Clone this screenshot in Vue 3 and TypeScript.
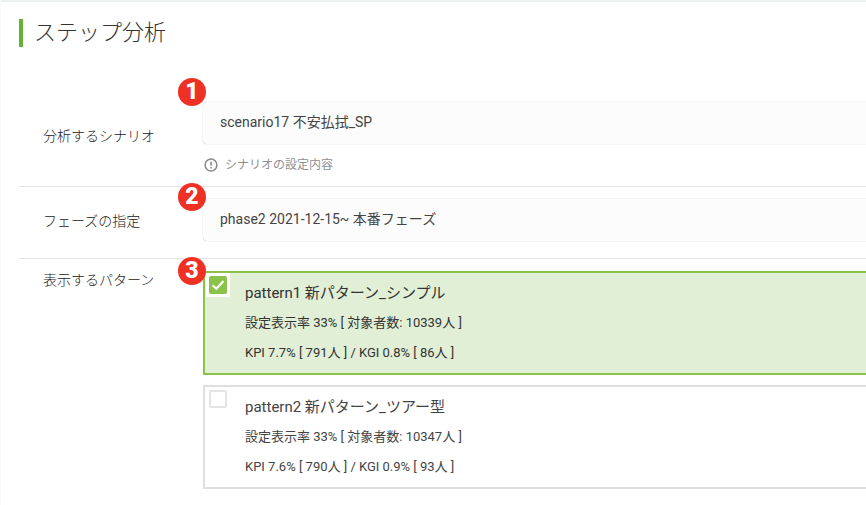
<script setup lang="ts">
interface Pattern {
  name: string
  rate: string
  kpi: string
  on: boolean
}
const patterns: Pattern[] = [
  { name: 'pattern1 新パターン_シンプル', rate: '設定表示率 33% [ 対象者数: 10339人 ]', kpi: 'KPI 7.7% [ 791人 ] / KGI 0.8% [ 86人 ]', on: true },
  { name: 'pattern2 新パターン_ツアー型', rate: '設定表示率 33% [ 対象者数: 10347人 ]', kpi: 'KPI 7.6% [ 790人 ] / KGI 0.9% [ 93人 ]', on: false },
]
</script>

<template>
  <div class="page">
    <h1 class="title">ステップ分析</h1>

    <section class="row row-one">
      <div class="label label-one">分析するシナリオ</div>
      <div class="body">
        <span class="badge">1</span>
        <div class="field">scenario17 不安払拭_SP</div>
        <div class="hint">
          <svg width="14" height="14" viewBox="0 0 14 14" fill="none">
            <circle cx="7" cy="7" r="5.9" stroke="#8a8a8a" stroke-width="1.5" />
            <path d="M7 3.5v4.2M7 8.9v1.5" stroke="#8a8a8a" stroke-width="1.5" />
          </svg>
          <span>シナリオの設定内容</span>
        </div>
      </div>
    </section>

    <section class="row row-two">
      <div class="label label-two">フェーズの指定</div>
      <div class="body">
        <span class="badge">2</span>
        <div class="field">phase2 2021-12-15~ 本番フェーズ</div>
      </div>
    </section>

    <section class="row row-three">
      <div class="label label-three">表示するパターン</div>
      <div class="body cards">
        <span class="badge">3</span>
        <div v-for="p in patterns" :key="p.name" class="card" :class="{ on: p.on }">
          <span class="check">
            <span class="box">
              <svg v-if="p.on" width="14" height="12" viewBox="0 0 14 12" fill="none">
                <path d="M1.5 6.2l3.8 3.6 7.2-7.8" stroke="#fff" stroke-width="2.2" />
              </svg>
            </span>
          </span>
          <div class="name">{{ p.name }}</div>
          <div class="meta">{{ p.rate }}</div>
          <div class="meta">{{ p.kpi }}</div>
        </div>
      </div>
    </section>
  </div>
</template>

<style>
html,
body {
  margin: 0;
  overflow: hidden;
  background: #fff;
}
</style>

<style scoped>
.page {
  width: 866px;
  height: 505px;
  box-sizing: border-box;
  padding: 19px 0 0 18px;
  border-top: 2px solid #eef2ee;
  border-left: 1px solid #f8f8f8;
  overflow: hidden;
  font-family: Roboto, "Noto Sans CJK JP", sans-serif;
  font-weight: 300;
  color: #333;
  background: #fff;
}
.title {
  margin: -2px 0 0;
  height: 28px;
  line-height: 28px;
  border-left: 4px solid #67b136;
  padding-left: 11px;
  font-size: 22px;
  font-weight: 300;
  color: #333;
}
.row {
  display: flex;
  border-bottom: 1px solid #e6e6e6;
}
.row-one {
  margin-top: 55px;
  height: 84px;
}
.row-two {
  height: 71px;
}
.row-three {
  border-bottom: 0;
}
.label {
  width: 184px;
  flex: none;
  box-sizing: border-box;
  padding-left: 24px;
  font-size: 14px;
  line-height: 20px;
  color: #222;
}
.label-one {
  padding-top: 24px;
}
.label-two {
  padding-top: 24px;
}
.label-three {
  padding-top: 11px;
}
.body {
  position: relative;
  flex: 1;
  min-width: 0;
}
.badge {
  position: absolute;
  left: -25px;
  top: -24px;
  width: 28px;
  height: 28px;
  border-radius: 50%;
  background: #ee3124;
  color: #fff;
  font-size: 23px;
  font-weight: 900;
  line-height: 28px;
  text-align: center;
  z-index: 2;
}
.row-two .badge {
  top: -4px;
}
.row-three .badge {
  top: -2px;
}
.field {
  box-sizing: border-box;
  height: 42px;
  margin-right: -8px;
  padding-left: 17px;
  line-height: 40px;
  font-size: 14px;
  font-weight: 400;
  color: #444;
  background: #fcfcfc;
  border-radius: 4px;
  box-shadow: 0 0 1px rgba(0, 0, 0, 0.4);
}
.row-two .field {
  margin-top: 12px;
}
.hint {
  display: flex;
  align-items: center;
  gap: 7px;
  margin-top: 12px;
  padding-left: 1px;
  font-size: 12px;
  line-height: 18px;
  font-weight: 400;
  color: #8f8f8f;
}
.cards {
  padding-top: 12px;
  display: flex;
  flex-direction: column;
  gap: 10px;
}
.card {
  position: relative;
  box-sizing: border-box;
  height: 104px;
  margin-right: -8px;
  padding: 9px 0 0 40px;
  border: 2px solid #dfdfdf;
  background: #fff;
  color: #444;
}
.card.on {
  border-color: #8bc34a;
  background: #e0efd6;
  color: #333;
}
.check {
  position: absolute;
  left: 1px;
  top: 0;
  width: 24px;
  height: 24px;
  display: flex;
  align-items: center;
  justify-content: center;
}
.card.on .check {
  background: #fff;
}
.box {
  box-sizing: border-box;
  width: 18px;
  height: 18px;
  display: flex;
  align-items: center;
  justify-content: center;
  border: 2px solid #e4e4e4;
  border-radius: 2px;
  background: #fff;
}
.card.on .box {
  border: 0;
  background: #8bc34a;
}
.name {
  font-size: 15px;
  line-height: 22px;
  font-weight: 400;
}
.meta {
  margin-top: 9px;
  font-size: 13px;
  line-height: 21px;
  font-weight: 400;
}
.name + .meta {
  margin-top: 8px;
}
</style>
